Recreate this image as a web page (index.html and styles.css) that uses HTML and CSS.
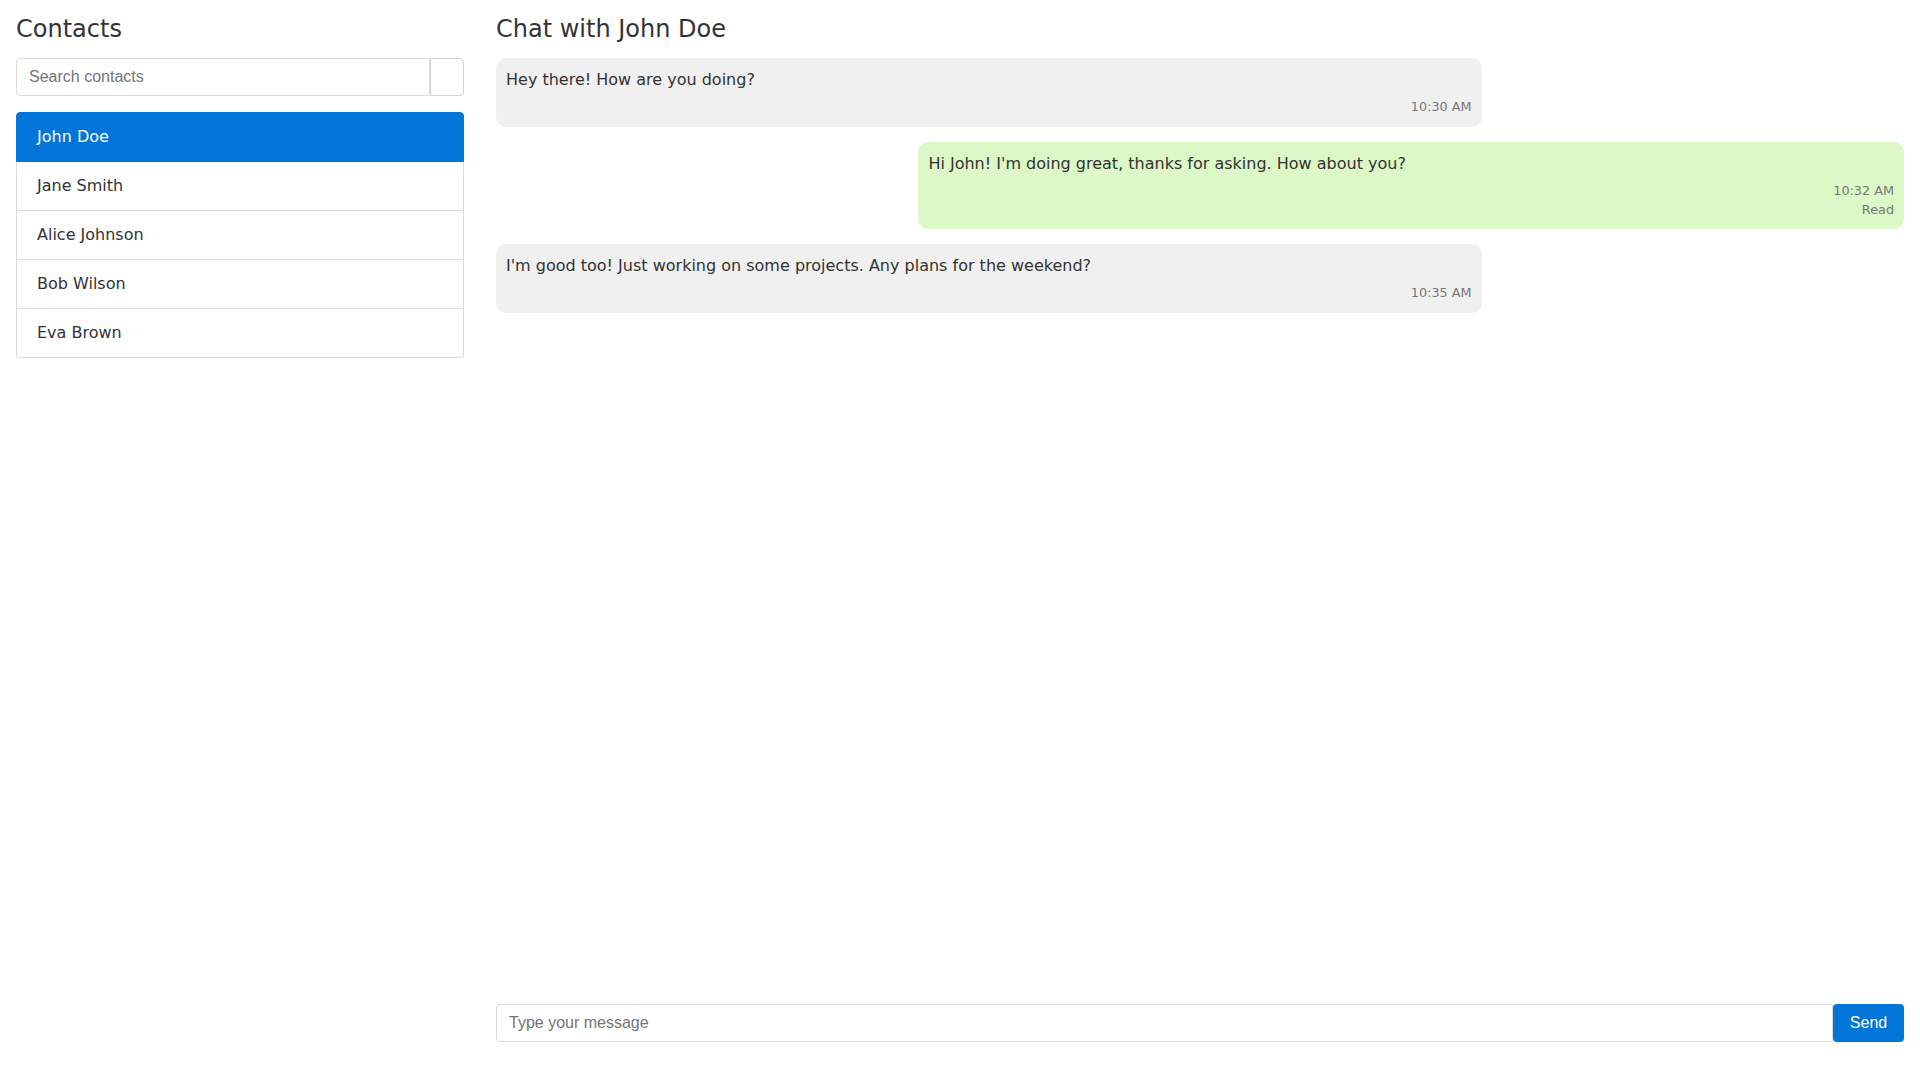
FILE: index.html
```html
<!DOCTYPE html>
<html lang="en">
<head>
<meta charset="utf-8">
<title>Chat</title>
<link rel="stylesheet" href="styles.css">
</head>
<body>
<div class="app">
  <aside class="sidebar">
    <h2 class="title">Contacts</h2>
    <div class="search-group">
      <input class="search-input" type="text" placeholder="Search contacts">
      <button class="search-btn" type="button"></button>
    </div>
    <ul class="contact-list">
      <li class="contact active">John Doe</li>
      <li class="contact">Jane Smith</li>
      <li class="contact">Alice Johnson</li>
      <li class="contact">Bob Wilson</li>
      <li class="contact">Eva Brown</li>
    </ul>
  </aside>
  <main class="chat">
    <h2 class="title">Chat with John Doe</h2>
    <div class="messages">
      <div class="msg received">
        <div class="msg-text">Hey there! How are you doing?</div>
        <div class="msg-time">10:30 AM</div>
      </div>
      <div class="msg sent">
        <div class="msg-text">Hi John! I'm doing great, thanks for asking. How about you?</div>
        <div class="msg-time">10:32 AM</div>
        <div class="msg-status">Read</div>
      </div>
      <div class="msg received">
        <div class="msg-text">I'm good too! Just working on some projects. Any plans for the weekend?</div>
        <div class="msg-time">10:35 AM</div>
      </div>
    </div>
    <form class="composer">
      <input class="composer-input" type="text" placeholder="Type your message">
      <button class="send-btn" type="button">Send</button>
    </form>
  </main>
</div>
</body>
</html>
```
FILE: styles.css
```css
html, body {
  margin: 0;
  padding: 0;
  background: #fff;
}
body {
  font-family: "DejaVu Sans", sans-serif;
  font-size: 16px;
  line-height: 1.5;
  color: #333;
}
.app {
  box-sizing: border-box;
  height: 100vh;
  padding: 15px 16px 38px;
  display: flex;
  gap: 32px;
}
.sidebar {
  width: 448px;
  flex: none;
  display: flex;
  flex-direction: column;
}
.title {
  margin: 0 0 14px;
  font-size: 24px;
  font-weight: 400;
  line-height: 1.2;
  color: #333;
}
.search-group {
  display: flex;
  height: 38px;
}
.search-input {
  flex: 1;
  min-width: 0;
  box-sizing: border-box;
  height: 38px;
  margin: 0;
  padding: 0 12px;
  border: 1px solid #dcdcdc;
  border-radius: 4px 0 0 4px;
  font-family: "Liberation Sans", Arial, sans-serif;
  font-size: 16px;
  color: #333;
  outline: none;
}
.search-input::placeholder,
.composer-input::placeholder {
  color: #757575;
}
.search-btn {
  width: 34px;
  box-sizing: border-box;
  height: 38px;
  margin: 0;
  padding: 0;
  background: #fff;
  border: 1px solid #d4d4d4;
  border-radius: 0 4px 4px 0;
}
.contact-list {
  list-style: none;
  margin: 16px 0 0;
  padding: 0;
}
.contact {
  padding: 12px 20px;
  border: 1px solid #dcdcdc;
  border-top: none;
}
.contact:first-child {
  border-top: 1px solid #dcdcdc;
  border-radius: 4px 4px 0 0;
}
.contact:last-child {
  border-radius: 0 0 4px 4px;
}
.contact.active {
  background: #0275d8;
  border-color: #0275d8;
  color: #fff;
}
.chat {
  flex: 1;
  min-width: 0;
  display: flex;
  flex-direction: column;
}
.messages {
  flex: 1;
  overflow-y: auto;
  display: flex;
  flex-direction: column;
  align-items: flex-start;
}
.msg {
  box-sizing: border-box;
  width: 70%;
  padding: 10px;
  border-radius: 10px;
  margin-bottom: 15px;
}
.msg.received {
  background: #f0f0f0;
}
.msg.sent {
  background: #dcf8c6;
  align-self: flex-end;
}
.msg-text {
  line-height: 24px;
}
.msg-time {
  margin-top: 5px;
  font-size: 12.8px;
  line-height: 20px;
  color: #777;
  text-align: right;
}
.msg-status {
  font-size: 12.8px;
  line-height: 18px;
  color: #777;
  text-align: right;
}
.composer {
  display: flex;
  margin: 0;
  height: 38px;
}
.composer-input {
  flex: 1;
  min-width: 0;
  box-sizing: border-box;
  height: 38px;
  margin: 0;
  padding: 0 12px;
  border: 1px solid #dcdcdc;
  border-radius: 4px 0 0 4px;
  font-family: "Liberation Sans", Arial, sans-serif;
  font-size: 16px;
  color: #333;
  outline: none;
}
.send-btn {
  width: 71px;
  box-sizing: border-box;
  height: 38px;
  margin: 0;
  padding: 0;
  border: none;
  border-radius: 4px;
  background: #0275d8;
  color: #fff;
  font-family: "Liberation Sans", Arial, sans-serif;
  font-size: 16px;
}
```
